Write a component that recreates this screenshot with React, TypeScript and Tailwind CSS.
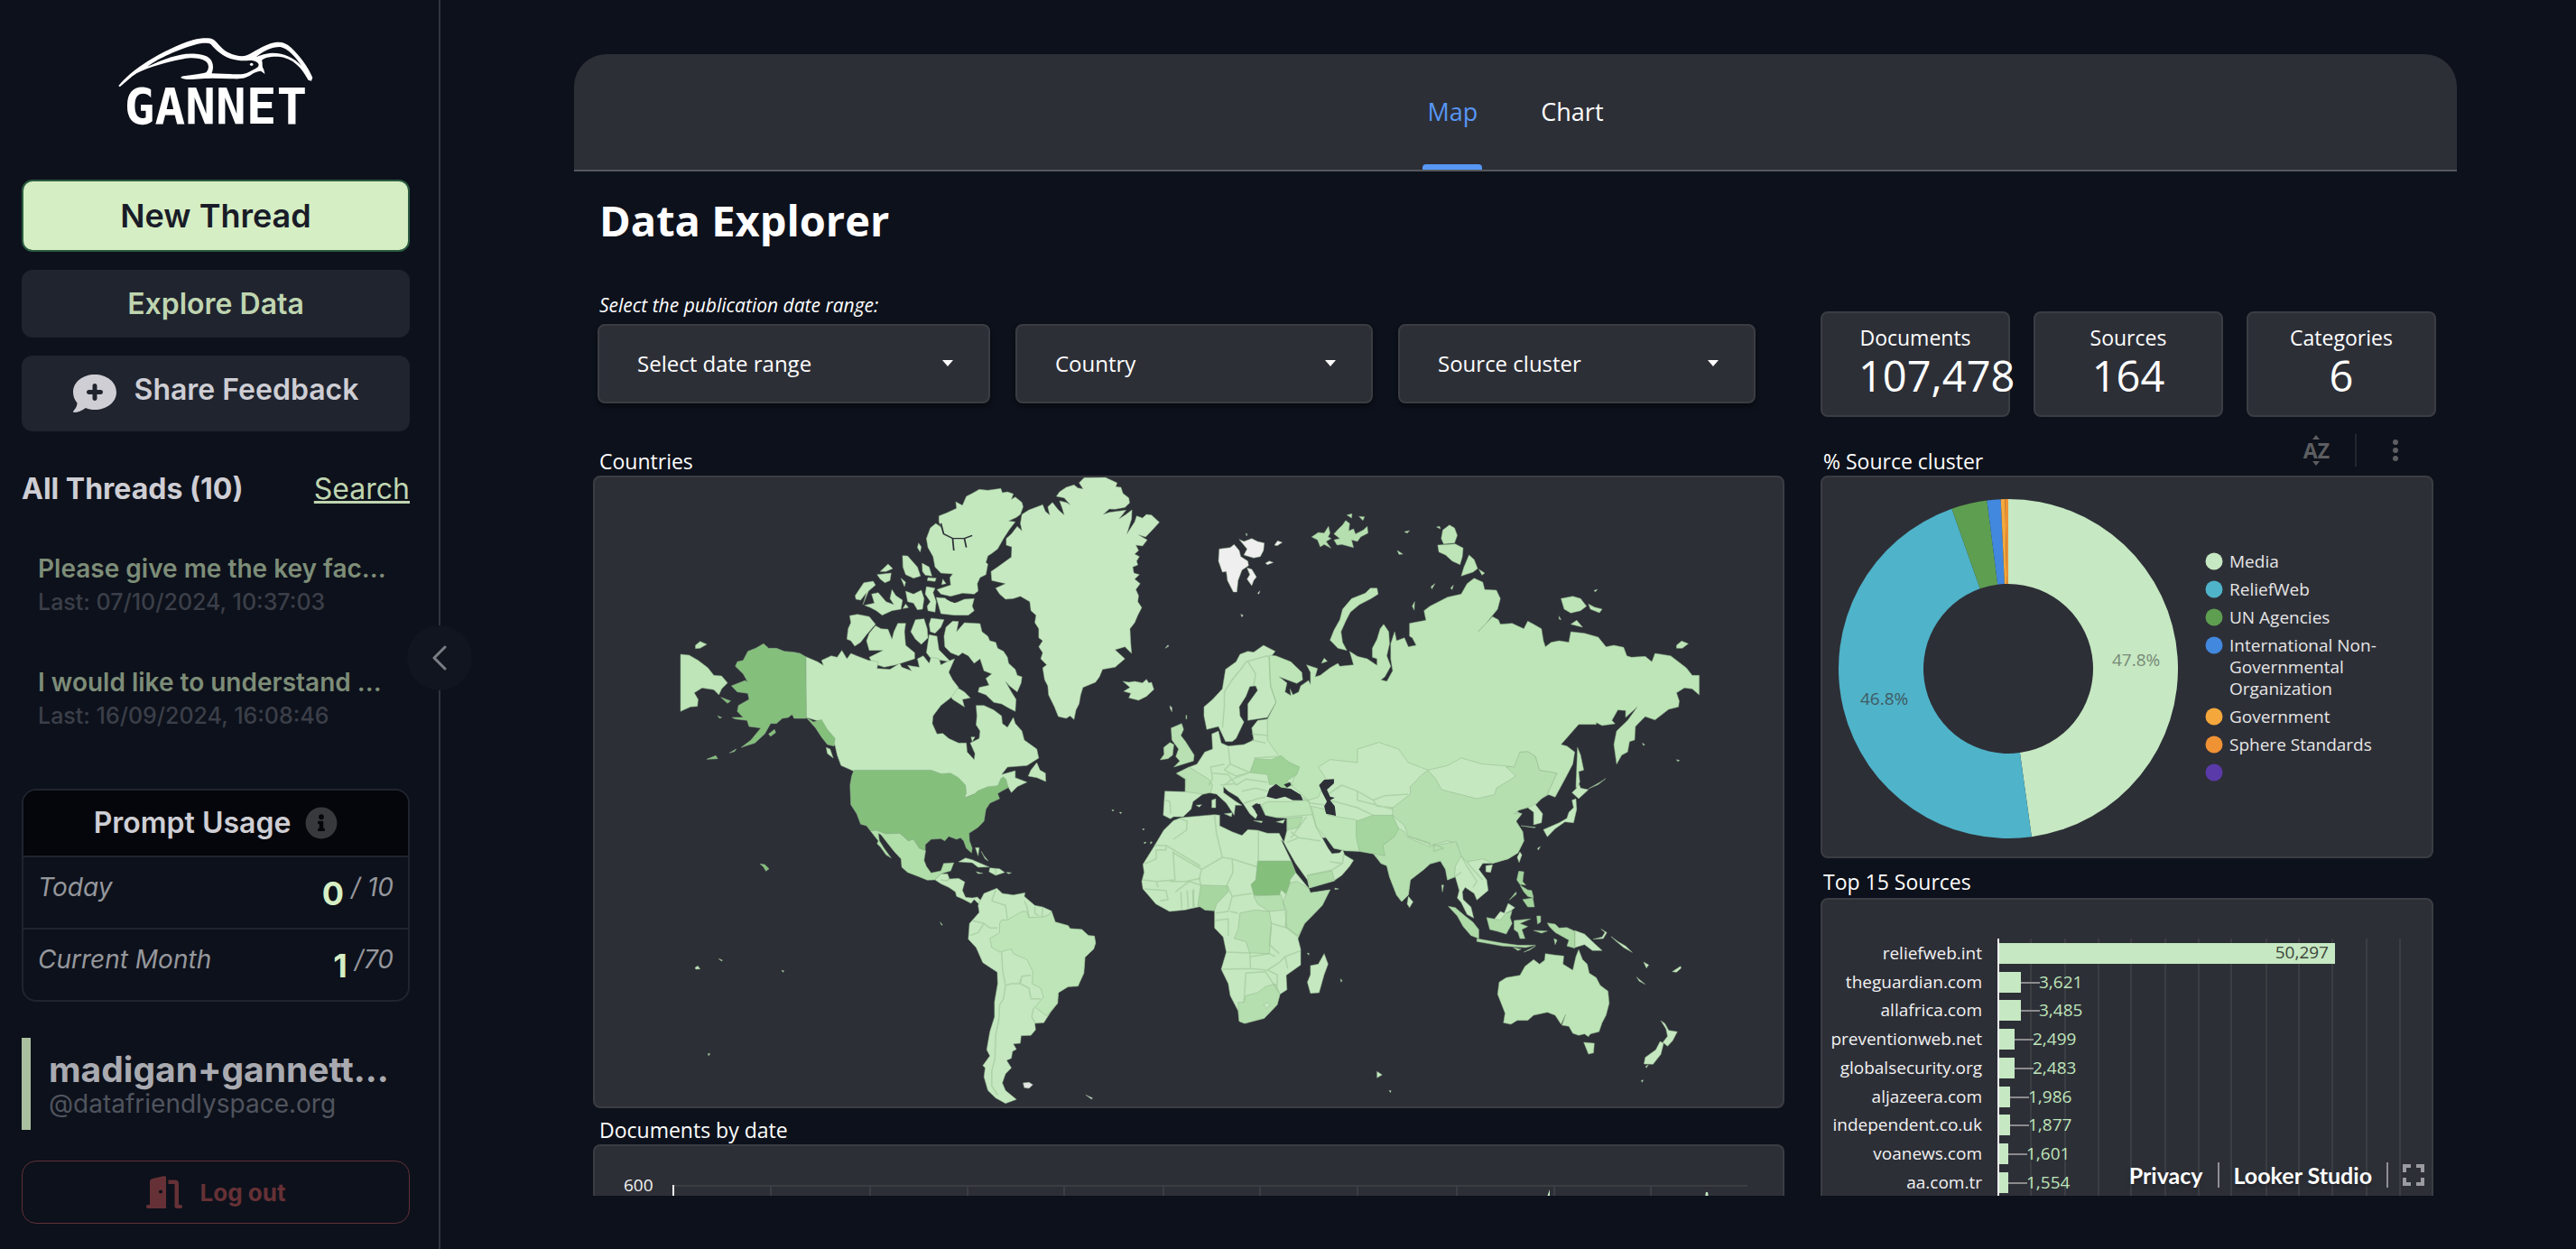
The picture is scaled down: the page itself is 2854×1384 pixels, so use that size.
import React from "react";
import { FaInfoCircle } from "react-icons/fa";

const threads = [
    { title: "Please give me the key facts", short: "Please give me the key fac...", last: "07/10/2024, 10:37:03" },
    { title: "I would like to understand", short: "I would like to understand ...", last: "16/09/2024, 16:08:46" },
];

const stats = [
    { label: "Documents", value: "107,478" },
    { label: "Sources", value: "164" },
    { label: "Categories", value: "6" },
];

const clusters = [
    { name: "Media", share: 47.8, color: "#c6e8c2" },
    { name: "ReliefWeb", share: 46.8, color: "#4fb3c9" },
    { name: "UN Agencies", share: 3.4, color: "#5e9e51" },
    { name: "International Non-Governmental Organization", share: 1.3, color: "#4188de" },
    { name: "Government", share: 0.4, color: "#f4a83c" },
    { name: "Sphere Standards", share: 0.3, color: "#ef9234" },
    { name: "", share: 0, color: "#5a3aa8" },
];

const sources = [
    { name: "reliefweb.int", value: "50,297", width: 372 },
    { name: "theguardian.com", value: "3,621", width: 24 },
    { name: "allafrica.com", value: "3,485", width: 24 },
    { name: "preventionweb.net", value: "2,499", width: 17 },
    { name: "globalsecurity.org", value: "2,483", width: 17 },
    { name: "aljazeera.com", value: "1,986", width: 12 },
    { name: "independent.co.uk", value: "1,877", width: 12 },
    { name: "voanews.com", value: "1,601", width: 10 },
    { name: "aa.com.tr", value: "1,554", width: 10 },
];

const Logo: React.FC = () => (
    <svg className="w-[216px] h-24" viewBox="380 128 626 288" preserveAspectRatio="none" role="img" aria-label="Gannet">
        <path
            fill="#fff"
            d="M381 287C400 262 430 235 475 205C520 178 570 150 620 135C650 127 675 128 685 133C697 140 708 162 732 176C750 185 770 190 785 188C805 184 830 160 870 146C900 138 915 142 935 160C965 190 990 225 1004 260L1000 271L990 268C975 240 950 198 900 191C870 189 848 194 841 203C845 212 840 222 847 232L851 248L838 238C825 240 815 243 805 252C790 262 775 265 750 264L680 262C650 263 620 266 600 266C580 264 575 258 590 255C620 250 650 248 662 243C673 232 672 213 660 205C640 193 610 193 590 198C540 207 480 225 440 245C420 258 400 278 385 291Z"
        />
        <path
            fill="#0d111b"
            d="M474 223C500 202 560 170 625 151C650 144 670 144 678 150C692 167 710 186 740 197C765 205 785 205 800 203C815 202 830 208 831 217C831 228 815 232 800 241C785 250 770 250 740 248L680 246C688 225 685 205 670 193C650 180 610 178 580 184C540 192 500 211 474 223ZM823 191C850 170 870 158 900 158C925 163 950 192 968 220C945 195 915 178 875 178C850 180 835 186 823 191Z"
        />
        <circle cx="808" cy="216" r="5" fill="#fff" />
    </svg>
);

const Sidebar: React.FC = () => (
    <aside className="relative w-[488px] shrink-0 h-full border-r-2 border-[#30343d] px-6 pr-8 font-['Inter',sans-serif] text-[#ceced4] flex flex-col">
        <a href="#home" className="relative mt-[42px] h-[98px] flex justify-center">
            <Logo />
            <span className="absolute bottom-0 text-[56px] leading-[44px] font-bold text-white font-['DejaVu_Sans_Mono',monospace]">GANNET</span>
        </a>

        <button className="mt-[59px] h-20 rounded-xl border-2 border-[#2a5c40] bg-[#d6eec4] text-[#191c28] text-4xl font-semibold">New Thread</button>
        <button className="mt-5 h-[75px] rounded-xl bg-[#20242f] text-[#bfd5b0] text-[32px] font-semibold">Explore Data</button>
        <button className="mt-5 h-[84px] rounded-xl bg-[#20242f] text-[32px] font-semibold flex items-center justify-center gap-5">
            <svg className="w-12 h-[42px]" viewBox="0 0 48 42" fill="currentColor">
                <path
                    fillRule="evenodd"
                    d="M24 0C37 0 48 8 48 19.500S37 39 24 39C20 39 17 38.500 14 37C10 40 5 42 1 42C-.5 42 0 40.500 1 39.500C3.500 37 4.500 34 4.500 31.500C1.500 28 0 24 0 19.500C0 8 11 0 24 0ZM24 10C22.500 10 21.500 11 21.500 12.500V17H17.500C16 17 15 18 15 19.500S16 22 17.500 22H21.500V26.500C21.500 28 22.500 29 24 29S26.500 28 26.500 26.500V22H30.500C32 22 33 21 33 19.500S32 17 30.500 17H26.500V12.500C26.500 11 25.500 10 24 10Z"
                />
            </svg>
            <span className="pb-2">Share Feedback</span>
        </button>

        <div className="mt-11 flex justify-between items-center leading-10 text-[32px]">
            <h2 className="font-bold">All Threads (10)</h2>
            <a href="#search" className="underline text-[#bfd5b0]">Search</a>
        </div>

        <ul className="mt-[50px] px-[18px] space-y-[52px]">
            {threads.map((t) => (
                <li key={t.title}>
                    <a href="#thread" title={t.title} className="block whitespace-nowrap">
                        <span className="block text-[28px] leading-9 font-semibold text-[#7d8d78]">{t.short}</span>
                        <span className="block text-[25px] leading-[38px] font-medium text-[#3b3f49]">Last: {t.last}</span>
                    </a>
                </li>
            ))}
        </ul>

        <section className="mt-[62px] border-2 border-[#1f242e] rounded-2xl overflow-hidden">
            <h2 className="h-[74px] bg-[#05060b] border-b-2 border-[#1f242e] flex items-center justify-center gap-4 text-[32px] font-semibold">
                Prompt Usage
                <FaInfoCircle className="text-4xl text-[#38393d]" />
            </h2>
            <div className="h-20 px-4 pt-4 flex justify-between border-b-2 border-[#1f242e] text-[28px] leading-[34px] italic text-[#95979c]">
                <span>Today</span>
                <span className="flex gap-2">
                    <b className="not-italic text-4xl leading-[48px] font-bold text-[#d6eec4]">0</b> / 10
                </span>
            </div>
            <div className="h-[78px] px-4 pt-4 flex justify-between text-[28px] leading-[34px] italic text-[#95979c]">
                <span>Current Month</span>
                <span className="flex gap-2">
                    <b className="not-italic text-4xl leading-[48px] font-bold text-[#d6eec4]">1</b> /70
                </span>
            </div>
        </section>

        <div className="mt-10 h-[102px] border-l-[10px] border-[#abc09f] pl-5 flex flex-col justify-center whitespace-nowrap">
            <strong className="text-[39px] leading-[44px] font-bold text-[#a9aab0]">madigan+gannett...</strong>
            <span className="text-[28px] leading-8 text-[#50545e]">@datafriendlyspace.org</span>
        </div>

        <button className="mt-[34px] h-[70px] rounded-2xl border border-[#5f3035] text-[#663136] text-[26px] font-bold flex items-center justify-center gap-5">
            <svg className="w-10 h-9" viewBox="0 0 40 36" fill="currentColor">
                <path fillRule="evenodd" d="M22 1.500V36H2C-.7 36-.7 32 2 32H4V7C4 4.500 5 3.500 7 3L19 .2C21 0 22 .5 22 1.500ZM16 15.500A2 2 0 1 0 16 19.600A2 2 0 1 0 16 15.500Z" />
                <path d="M24.500 4.500H32C34.500 4.500 36 6 36 8.500V32H38C40.700 32 40.700 36 38 36H34C32 36 31.500 35 31.500 33.500V9H24.500Z" />
            </svg>
            Log out
        </button>

        <button aria-label="Collapse sidebar" className="absolute top-[693px] -right-[37px] size-[72px] rounded-full bg-[#11151f] flex items-center justify-center">
            <svg className="w-4 h-7" viewBox="0 0 16 28" fill="none" stroke="#7a7d84" strokeWidth="3" strokeLinecap="round" strokeLinejoin="round">
                <path d="M14 2L2 14L14 26" />
            </svg>
        </button>
    </aside>
);

type SelectProps = { id: string; label: string; className: string };

const Select: React.FC<SelectProps> = ({ id, label, className }) => (
    <div className={"relative " + className}>
        <select id={id} aria-label={label} className="w-full h-[88px] appearance-none rounded-lg border-2 border-[#3a3d42] bg-[#2d2f37] pl-[42px] text-2xl text-white shadow-md shadow-black/40">
            <option>{label}</option>
        </select>
        <svg className="absolute right-[41px] top-10 w-3 h-[7px] pointer-events-none" viewBox="0 0 12 7">
            <path d="M0 0H12L6 7Z" fill="#fff" />
        </svg>
    </div>
);

/* land shapes, one list per quarter of the map */
const northWest = [
    // Greenland
    ["#c7e9c2", "M1271 88L1325 87 1355 105 1352 118 1365 120 1370 140 1385 155 1387 172 1375 187 1350 193 1335 192 1320 210 1335 203 1378 196 1360 225 1378 210 1393 195 1392 225 1380 275 1400 235 1405 215 1420 222 1430 210 1443 212 1463 236 1445 262 1428 285 1410 278 1432 295 1420 315 1403 312 1410 330 1400 342 1412 350 1405 365 1408 378 1395 385 1398 405 1412 410 1400 425 1414 440 1403 460 1410 480 1408 500 1418 520 1408 545 1400 570 1388 590 1390 640 1392 672 1375 650 1350 660 1375 690 1350 718 1318 725 1310 750 1300 768 1268 785 1262 810 1258 840 1250 860 1245 892 1235 880 1225 888 1205 882 1195 850 1180 810 1178 780 1170 760 1165 720 1175 710 1160 690 1165 670 1155 650 1165 630 1155 620 1155 590 1145 570 1148 545 1135 530 1132 500 1108 482 1090 490 1070 492 1055 475 1045 455 1070 440 1035 430 1033 400 1050 385 1085 352 1086 318 1072 312 1072 290 1085 275 1100 250 1112 265 1108 240 1112 210 1130 195 1165 178 1172 200 1183 212 1178 185 1190 170 1205 195 1220 212 1215 190 1208 165 1225 170 1235 178 1220 155 1200 150 1208 135 1225 120 1245 112 1255 122 1268 125 1258 105Z"],
    // Ellesmere and Axel Heiberg
    ["#c3e8be", "M1003 127L1025 130 1058 124 1062 138 1075 135 1090 142 1085 160 1095 152 1112 170 1115 185 1108 210 1098 220 1078 232 1095 235 1080 260 1065 290 1050 325 1035 340 1025 348 1020 370 1025 375 1020 410 1005 420 998 440 1000 465 990 475 960 472 930 482 905 475 895 460 930 445 928 420 935 408 905 405 890 385 885 350 872 320 868 290 878 255 892 240 905 252 915 280 900 235 900 215 920 205 945 190 943 168 960 180 970 150 985 140Z"],
    ["#c3e8be", "M893 486L915 488 930 500 945 503 965 492 990 490 985 515 990 530 975 545 940 545 905 540ZM868 450L890 455 885 470 893 500 890 535 872 530 870 515 878 500 865 475ZM807 347L820 348 845 385 853 415 835 422 815 410 808 385ZM857 372L875 385 882 415 865 412 858 400ZM770 375L782 390 765 400 750 400ZM742 410L778 405 775 430 762 437 750 425ZM848 305L855 318 852 335 845 320ZM872 420L893 422 890 433 870 430ZM910 425L918 440 907 443ZM803 422L815 435 812 450ZM708 437L732 432 738 445 720 465 706 510 715 470 700 495 688 492 686 480ZM728 475L745 470 765 500 785 510 775 490 780 460 790 480 807 495 803 525 780 530 755 545 740 530 725 520 710 512 735 505ZM815 465L835 475 855 462 862 490 858 525 845 527 835 505 820 500ZM815 508L822 520 808 523Z"],
    ["#c3e8be", "M672 547L692 542 722 550 738 575 715 610 700 635 685 648 675 630 665 625 668 590 675 570ZM738 580L752 590 770 592 780 625 785 600 795 572 815 572 812 600 815 645 838 670 838 690 815 700 790 710 760 718 730 705 722 685 757 662 722 662 715 630 722 605ZM840 560L862 557 870 590 872 620 855 642 840 625 828 600ZM880 555L913 560 905 585 890 605 878 600 875 575ZM875 610L895 615 900 660 930 700 880 690 868 670Z"],
    // Baffin
    ["#c3e8be", "M935 565L950 566 945 600 965 570 1005 573 1010 600 1025 615 1030 630 1045 635 1050 655 1065 665 1075 685 1078 705 1095 725 1100 745 1112 750 1110 770 1100 800 1080 780 1070 765 1085 800 1097 825 1095 865 1080 855 1060 840 1040 835 1020 810 1000 800 1003 785 1028 778 1020 755 1035 740 1015 730 1005 690 990 705 975 680 960 670 950 680 930 670 915 650 913 615 918 585ZM940 780L965 800 980 820 960 825 965 850 935 825 930 815Z"],
    // Canada
    ["#c3e8be", "M560 683L590 700 605 712 600 695 625 680 640 685 652 662 665 690 675 672 690 680 720 695 745 700 742 722 775 725 800 705 805 718 830 730 820 712 850 718 845 690 860 680 875 705 880 685 900 690 905 710 920 700 940 690 925 735 935 760 950 785 930 820 905 845 885 880 883 905 895 940 910 938 925 955 950 970 970 970 972 1000 990 1025 992 1005 980 970 1003 955 1005 930 995 910 997 880 995 845 1015 845 1040 860 1060 880 1062 905 1075 918 1090 885 1095 905 1112 930 1118 960 1150 990 1155 1020 1125 1045 1075 1050 1060 1075 1095 1062 1095 1085 1125 1100 1100 1115 1085 1135 1075 1112 1050 1112 990 1140 966 1152 900 1090 685 1065 650 1045 640 1010 635 980 600 900 561 885ZM1150 1035L1158 1060 1172 1070 1173 1098 1150 1085 1128 1080 1135 1060ZM612 985L622 990 630 1020 615 1005ZM982 950L992 950 985 965Z"],
    // Alaska
    ["#84bf7c", "M452 640L465 655 485 655 505 665 530 668 545 672 560 683 561 888 530 888 525 875 515 885 500 888 485 905 470 905 455 940 430 970 410 978 395 985 420 960 445 920 415 915 410 895 380 890 372 885 400 885 385 865 388 845 415 825 412 805 385 800 370 780 405 762 412 768 400 740 380 715 385 700 400 695 412 665 432 655ZM561 885L580 900 600 892 615 925 635 955 632 980 615 975 600 950 585 920ZM365 1003L382 990 378 998ZM307 1024L330 1012 335 1022ZM343 818L368 830 360 838ZM465 940L480 925 483 935 470 948ZM335 880L345 885 340 888Z"],
    ["#bde5b7", "M240 675L262 678 285 695 310 720 325 745 345 747 360 770 345 790 338 810 325 793 295 787 275 803 285 825 283 848 265 850 240 865ZM278 645L290 632 307 642 290 655 278 656Z"],
    // Iceland, Britain, Ireland
    ["#c3e8be", "M1370 765L1385 768 1400 765 1420 770 1430 758 1436 770 1443 768 1449 792 1430 815 1410 828 1385 820 1390 805 1372 798 1388 785Z"],
    ["#b8e0b2", "M1493 920L1520 905 1525 925 1518 945 1530 965 1552 1010 1550 1030 1500 1050 1515 1030 1505 1015 1512 990 1495 960ZM1474 985L1490 968 1500 975 1497 1010 1485 1022 1465 1026 1475 1008ZM1531 878L1533 878 1533 890 1531 890Z"],
    ["#d8e0d6", "M1478 655L1485 644 1487 648ZM1490 846L1495 852 1495 866 1491 856Z"],
];

const southWest = [
    ["#84bf7c", "M683 -20L880 -20 905 -8 930 -10 950 5 968 30 970 55 966 72 990 60 1000 48 1025 35 1050 32 1058 8 1065 2 1072 12 1077 38 1060 50 1050 58 1055 75 1030 90 1020 110 1015 150 1000 170 977 190 978 215 985 240 983 255 970 240 963 215 955 205 945 210 925 200 915 215 905 208 880 210 865 228 865 248 850 240 835 210 822 215 800 190 765 192 740 180 725 182 715 165 700 160 690 125 675 95 673 30 677 0ZM443 292L455 294 466 308 458 316 452 302Z"],
    ["#b0dfa9", "M725 182L740 180 765 192 800 190 822 215 835 210 850 240 866 248 862 280 868 300 880 322 905 315 912 290 938 288 930 315 905 325 890 345 870 346 850 335 820 320 805 303 803 275 785 250 770 225 752 195 745 190 748 215 760 240 778 272 765 262 750 235 742 225 745 215Z"],
    ["#c3e8be", "M890 345L905 325 922 325 927 342 950 340 966 352 960 380 968 403 985 405 998 402 1008 415 1003 427 990 410 982 423 960 408 945 400 942 385 925 370 905 358ZM950 285L968 272 985 278 1028 302 1000 303 985 288ZM1030 305L1055 308 1068 320 1045 330 1028 318ZM995 318L1012 323 1000 324ZM1072 320L1085 321 1078 325ZM993 238L1003 238 1000 265ZM1008 250L1018 275 1026 282 1015 265Z"],
    ["#c5e8c0", "M1005 415L1015 390 1048 373 1062 390 1090 395 1120 388 1118 400 1145 430 1165 435 1187 448 1197 485 1230 497 1235 507 1265 510 1282 530 1297 532 1300 555 1295 575 1273 602 1270 655 1255 698 1230 700 1205 720 1203 755 1185 785 1168 820 1145 822 1147 843 1135 862 1110 863 1108 888 1090 890 1098 908 1088 915 1085 938 1073 945 1085 970 1070 990 1062 1020 1070 1045 1098 1075 1070 1088 1045 1070 1025 1045 1015 1000 1018 970 1012 962 1030 930 1022 910 1030 850 1042 800 1042 750 1050 690 1049 652 1012 620 995 570 975 542 978 490 1003 453 1000 430Z"],
    ["#bde5b7", "M1060 478L1075 478 1085 470 1112 450 1125 450 1130 470 1165 468 1180 462 1187 448 1197 485 1230 497 1235 507 1265 510 1282 530 1297 532 1300 555 1295 575 1273 602 1270 655 1255 698 1230 700 1205 720 1203 755 1175 797 1145 768 1167 735 1160 705 1138 690 1140 650 1125 610 1090 590 1085 575 1055 585 1035 570 1030 540 1055 520 1055 490Z"],
    ["#e4e4e4", "M1115 1020L1130 1018 1140 1026 1130 1038 1118 1036ZM1275 1060L1292 1070 1290 1074Z"],
    ["#c3e8be", "M903 485L909 494 907 496ZM337 607L347 612 345 615ZM277 637L284 631 290 641 279 642ZM498 646L504 647 502 652ZM310 923L315 922 312 930ZM1342 112L1347 113 1344 117ZM1361 120L1367 121 1364 125ZM1420 175L1425 176 1422 180ZM1424 220L1430 220 1425 225ZM1441 218L1445 220 1440 226Z"],
];

const scandinavia = [
    ["#c5e8c0", "M78 850L100 825 125 790 133 725 160 700 170 675 190 665 205 668 230 645 260 665 245 690 262 720 262 835 240 885 190 895 190 840 215 795 210 780 195 782 185 815 168 850 170 880 180 900 160 955 150 965 133 965 115 915 85 925 78 880Z"],
];

const southEast = [
    // Eurasia below Russia
    ["#c5e8c0", "M8 -8L40 -30 60 -40 80 -80 100 -90 98 -140 115 -150 122 -110 140 -100 180 -105 205 -120 200 -160 215 -185 240 -190 400 -150 650 -100 900 -90 1000 -60 985 10 960 60 940 75 925 95 943 125 940 155 920 162 920 120 905 105 885 112 885 95 870 115 890 125 875 150 892 185 895 215 880 255 855 275 815 290 790 290 780 310 800 345 804 380 775 412 768 390 745 370 738 385 740 410 760 435 767 472 750 460 735 420 725 405 730 380 720 335 700 345 695 310 682 282 655 292 640 310 605 345 600 395 583 417 570 395 552 335 545 298 530 290 510 258 475 250 440 248 410 240 390 205 380 205 395 240 405 258 425 255 432 243 437 262 460 280 450 300 430 330 410 348 347 372 342 345 312 290 290 240 282 220 290 180 290 140 265 138 235 130 222 95 212 90 200 100 215 128 210 142 195 125 180 95 165 70 140 50 128 35 128 55 160 85 175 97 158 97 155 130 135 90 110 60 90 55 75 60 50 85 45 110 25 135 0 135 -8 142 -26 130 -22 50 30 52 30 10ZM98 80L108 75 108 105 98 105ZM130 125L150 122 148 135ZM58 97L72 95 66 103ZM263 152L285 145 280 157ZM205 148L228 150 225 155Z"],
    ["#b5dfaf", "M560 105L605 60 605 35 635 -5 650 -20 670 10 685 45 730 60 775 75 820 62 825 40 875 0 850 -30 870 -35 880 -80 905 -82 925 -65 935 -20 980 -10 955 60 915 100 885 112 870 125 890 125 875 150 892 185 895 215 880 255 855 275 815 290 790 275 750 285 728 260 725 225 700 215 660 230 600 200 590 165 560 130Z"],
    ["#b5dfaf", "M565 165L590 185 600 205 655 235 690 225 722 218 735 265 720 300 718 335 700 345 695 310 682 282 655 292 640 310 605 345 600 395 583 417 570 395 552 335 545 298 530 290 515 262 535 230 565 200Z"],
    ["#a5d69f", "M467 150L510 130 560 130 575 175 565 200 535 230 540 265 510 258 475 250 465 205Z"],
    ["#bde5b7", "M352 100L385 110 395 130 467 145 467 205 475 250 440 248 410 240 390 205 365 170ZM225 95L240 85 300 85 345 80 355 128 290 135 265 138 235 130Z"],
    ["#aedba8", "M342 330L405 315 412 348 347 372ZM290 140L330 135 320 170 290 180Z"],
    ["#b8e0b2", "M8 -10L40 -30 90 10 100 30 95 55 75 60 30 52 32 10Z"],
    // Africa
    ["#c5e8c0", "M0 148L20 138 105 128 118 130 118 165 150 185 175 197 190 178 215 180 240 190 270 190 282 220 275 212 300 280 312 320 345 372 350 388 400 378 380 430 335 490 318 540 325 575 325 628 288 662 290 710 272 725 265 760 232 805 182 822 168 815 165 780 145 730 140 690 122 642 135 585 127 535 105 505 105 448 80 445 75 432 45 440 30 445 -10 450 -45 425 -78 375 -81 350 -75 320 -78 293 -50 235 -25 180Z"],
    ["#84bf7c", "M215 282L300 282 312 320 298 345 296 375 290 395 275 378 270 400 235 398 205 395 198 360 210 345Z"],
    ["#a7d6a0", "M70 362L138 365 140 385 110 425 105 447 80 445 62 430Z"],
    ["#b5dfaf", "M298 355L315 350 345 372 350 388 400 378 380 430 335 490 318 530 285 500 290 450 280 420ZM205 398L275 395 285 445 245 450 215 425Z"],
    ["#b5dfaf", "M170 455L210 445 245 450 250 490 245 590 195 588 185 550 155 540 165 510ZM165 752L180 752 185 730 215 720 235 700 260 690 272 725 265 760 232 805 182 822 168 815Z"],
    ["#c5e8c0", "M385 590L395 625 385 660 372 720 350 722 342 685 350 660 350 630 370 625ZM230 760L240 752 247 762 238 772ZM600 400L612 418 603 437 597 425ZM885 252L890 262 883 287 878 270ZM798 298L815 295 810 320 798 318ZM412 372L422 375 413 377ZM685 362L690 362 687 385ZM930 240L937 234 932 246ZM427 674L431 680 428 685ZM342 588L347 590 345 595ZM520 982L533 993 520 1003ZM551 1045L556 1046 554 1052Z"],
    // Oceania
    ["#bde5b7", "M832 685L850 670 885 662 898 632 920 610 935 625 948 612 950 590 975 595 997 598 995 625 1020 645 1028 600 1035 577 1045 610 1057 625 1062 655 1080 670 1090 695 1110 715 1113 755 1105 795 1095 820 1087 850 1065 857 1060 866 1050 857 1035 862 1020 855 1010 832 992 828 1002 792 990 825 975 795 955 785 920 795 905 812 878 812 862 825 843 820 847 788 828 725ZM1048 885L1075 888 1073 920 1060 924Z"],
    ["#c5e8c0", "M1245 813L1255 822 1265 845 1287 850 1275 880 1262 898 1250 885 1262 865 1258 840ZM1243 882L1252 888 1245 925 1225 958 1202 957 1205 935 1232 910ZM1206 965L1213 960 1208 970ZM1195 1012L1200 1010 1197 1018Z"],
    ["#aedba8", "M702 433L720 437 745 465 765 485 780 510 780 540 760 530 740 500 725 465ZM775 540L840 555 880 562 925 562 900 570 840 565 775 550ZM895 585L925 565 910 578ZM800 470L820 475 845 458 865 448 860 470 865 490 850 525 825 515 808 510ZM870 480L912 475 885 490 905 500 890 510 898 540 885 540 880 520 870 510ZM955 488L975 492 985 505 1005 503 1025 515 1025 572 1005 565 1010 545 975 520 960 500ZM920 513L955 515 940 522ZM972 540L980 545 975 560ZM868 570L888 575 880 580Z"],
    ["#a2d49b", "M882 316L895 318 892 350 900 362 885 360 877 345ZM885 362L905 378 915 380 920 405 905 400 895 385ZM875 385L858 412 876 392ZM892 410L918 405 922 435 905 435ZM928 465L938 465 938 485 930 492Z"],
    ["#c5e8c0", "M820 475L835 450 845 455 855 423 872 437 862 448 850 455 835 478ZM1025 513L1050 525 1070 550 1095 580 1070 580 1050 560 1025 570ZM1072 542L1095 535 1102 520 1092 508 1107 520 1098 540ZM1118 533L1135 550 1155 565 1172 586 1150 570 1130 548ZM1183 668L1205 692 1190 682ZM1201 618L1214 628 1208 638ZM1274 650L1295 632 1297 638 1285 652Z"],
    // Japan
    ["#c3e8be", "M945 178L985 155 1005 140 1010 120 1022 105 1018 80 1028 75 1030 110 1022 155 1000 152 975 175 955 202ZM1018 55L1030 40 1030 5 1040 40 1060 45 1035 75ZM1060 42L1090 20 1104 8 1085 28ZM888 165L925 170 922 172Z"],
];

const russia = [
    ["#bde5b7", "M245 678L262 680 300 700 328 735 330 760 315 772 270 750 290 770 285 800 300 812 298 790 305 810 320 800 325 780 345 762 350 775 350 735 340 710 368 722 362 750 375 745 400 720 420 705 425 715 460 710 450 665 470 682 495 690 520 712 520 690 508 685 508 655 520 625 528 590 537 575 550 600 552 640 545 680 555 715 540 750 530 760 545 765 560 730 555 690 555 640 565 600 570 630 590 620 600 650 620 645 610 620 603 615 603 572 645 562 640 530 655 515 700 485 735 475 750 440 768 422 790 435 795 460 825 462 835 490 828 525 800 570 778 600 815 550 830 560 835 575 865 572 895 590 905 565 920 575 940 590 945 630 950 650 965 635 985 630 1010 635 1015 600 1050 605 1085 618 1105 650 1125 645 1150 652 1158 680 1170 685 1205 682 1222 700 1230 672 1270 680 1310 720 1325 745 1343 745 1343 810 1325 790 1305 787 1285 803 1292 830 1290 850 1265 858 1230 893 1205 882 1195 895 1180 915 1178 960 1165 965 1160 1000 1145 1010 1132 1040 1125 975 1132 930 1160 895 1185 850 1155 885 1155 862 1135 860 1120 895 1128 906 1095 912 1080 902 1080 908 1035 908 990 975 1005 980 1025 1000 1020 1040 1000 1090 975 1150 955 1140 980 1070 935 1060 925 1015 905 998 885 1000 870 1050 840 1045 790 1040 735 1020 700 1045 650 1060 600 1035 575 990 525 968 470 990 470 1035 400 1025 370 1050 390 1090 380 1120 370 1150 345 1160 300 1110 320 1050 270 1015 240 960 240 890 262 835 248 780 245 720Z"],
    ["#9ed296", "M208 1022L250 1025 275 1012 295 1035 322 1050 315 1075 290 1095 305 1110 280 1122 262 1108 245 1108 240 1075 195 1068Z"],
    ["#bde5b7", "M400 628L410 595 425 560 432 525 455 490 490 472 503 455 520 455 523 475 505 490 475 510 452 535 440 565 428 600 432 635 443 662 420 655ZM378 705L385 688 393 698ZM672 252L680 250 682 258ZM688 262L705 245 718 255 725 280 718 305 690 308 684 290ZM675 312L720 308 740 322 738 350 732 377 712 365 695 345 678 335ZM755 345L768 360 777 390 765 402 735 415 742 385ZM780 392L795 405 788 412ZM990 490L1020 482 1040 490 1055 515 1040 530 1015 538 998 525ZM1060 508L1075 518 1095 525 1088 537 1065 525ZM1015 575L1030 562 1045 585ZM1285 645L1298 631 1315 640 1300 655 1285 655ZM1032 985L1040 1010 1048 1060 1035 1065 1038 1100 1028 1120ZM610 515L616 500 615 528ZM658 450L668 440 660 458ZM708 455L715 445 712 460ZM572 330L586 342 576 343ZM590 268L603 264 597 272ZM1075 462L1083 460 1077 468ZM985 548L990 560 985 558ZM1198 970L1204 976 1200 978ZM1285 1025L1293 1028 1288 1031Z"],
    ["#b5dfaf", "M353 285L370 270 385 272 396 250 400 272 395 285 403 290 390 300 402 322 385 310 375 318 368 295ZM420 260L432 245 440 230 450 240 448 265 460 258 465 275 485 262 495 250 497 272 478 285 470 300 455 295 460 320 430 310 418 312 410 295 425 290 410 275ZM443 212L456 208 455 222ZM474 217L488 218 484 230Z"],
    ["#efefef", "M117 325L145 320 155 310 168 330 172 350 190 365 192 380 175 395 165 430 162 468 153 468 138 430 135 400 125 402 115 365ZM168 293L180 300 200 290 215 300 232 305 230 330 222 350 205 355 180 345 188 325ZM188 388L200 392 212 418 205 430 200 447 188 425 195 410ZM258 312L266 298 278 303 265 314ZM235 372L245 365 255 370 240 377ZM215 472L221 464 218 475ZM185 274L188 274 187 282ZM172 542L178 545 175 551Z"],
];

const westBorders =
    "M1060 585L1063 650 1070 695 1085 690 1105 690 1112 665 1135 662M1112 665L1108 690 1130 705 1135 740 1160 740M1070 695L1065 740 1055 760 1053 810 1045 860 1043 940 1035 980 1035 1030 1050 1060M985 480L1015 490 1030 505 1050 505M980 530L1000 520 1015 490M1045 378L1035 415 1070 430 1075 475M1118 415L1125 435 1130 470M1145 435L1145 455 1155 465M1165 437L1163 468M1142 770L1137 800 1147 822M905 345L920 348 927 342M1045 308L1045 328M1478 80L1490 85 1492 125M1450 230L1480 230 1480 245 1455 245 1455 275 1425 292M1480 230L1550 285 1568 300M1498 250L1503 345 1455 350M1420 345L1455 350 1460 370M1425 375L1480 380 1485 410 1465 415M1490 350L1530 350 1568 340M1518 385L1520 440M1548 380L1552 435";

const eastBorders =
    "M105 130L110 190 125 270 72 310 0 255M125 270L150 275 215 302M217 182L217 282M150 275L152 320 135 365M72 310L66 340 70 362 40 350 5 385M35 380L38 440M52 375L50 435M15 140L35 150 33 180 0 210M138 365L150 400 140 450 108 455M150 400L200 390M145 450L165 455M105 480L140 475 140 530M135 585L195 588 197 640 125 642M197 600L245 590 260 600M197 640L240 645 270 620M180 752L185 655 235 650 270 720M250 490L290 505 320 535M250 500L245 560 270 590M270 620L285 600 325 580M285 445L290 505M285 600L292 640M240 645L265 660 265 700M300 205L340 135M290 220L320 205 375 215M355 128L365 170 380 205M320 205L300 185M400 285L432 290 435 260M342 330L405 312 432 290M395 60L430 30 470 50 510 80 540 65 600 60M400 80L470 105 510 130M470 50L470 80 560 110M510 80L520 100 560 105M735 265L750 300 775 350 765 370M750 285L765 310 790 345M718 335L735 320M600 200L655 222 655 232M665 225L690 240 665 250ZM1025 515L1025 570M330 70L350 90 385 95M100 -10L140 -5 160 30M140 -95L145 -40 195 -12M130 -40L95 -30 100 10 90 30M145 -40L130 -20 160 0 195 -12M160 30L185 10 240 20M175 50L210 40 240 50M180 90L215 75 235 70M195 -12L150 10 130 30M205 -60L265 -65M200 -120L235 -110M200 -140L240 -135M120 30L160 25";

const nordicBorders = "M125 920L130 850 130 800 150 760 175 720 185 700 240 680 245 690M205 780L210 740 190 700M262 835L248 780 245 690";

const Shapes: React.FC<{ items: string[][] }> = ({ items }) => (
    <>
        {items.map(([fill, d], i) => (
            <path key={i} d={d} fill={fill} stroke="#8fb38b" strokeOpacity="0.5" strokeLinejoin="round" vectorEffect="non-scaling-stroke" />
        ))}
    </>
);

const Borders: React.FC<{ d: string }> = ({ d }) => (
    <path d={d} fill="none" stroke="#9cc496" strokeOpacity="0.6" strokeWidth="1.5" strokeLinejoin="round" vectorEffect="non-scaling-stroke" />
);

const WorldMap: React.FC = () => (
    <svg className="block w-full aspect-[1316/697]" viewBox="21 87 3034 2091" preserveAspectRatio="none" role="img" aria-label="Documents per country">
        <Shapes items={northWest} />
        <path d="M905 240L912 275 935 290 965 290 985 280M935 290L938 330M965 290L970 320M920 490L950 492 940 502Z" fill="none" stroke="#2d2f37" strokeWidth="4" />
        <g transform="translate(0 1080)">
            <Shapes items={southWest} />
        </g>
        <g transform="translate(1499 1080)">
            <Shapes items={southEast} />
        </g>
        <g transform="translate(1499 0)">
            <Shapes items={scandinavia} />
            <Shapes items={russia} />
            <Borders d={nordicBorders} />
        </g>
        <g transform="translate(0 1080)">
            <Borders d={westBorders} />
        </g>
        <g transform="translate(1499 1080)">
            <Borders d={eastBorders} />
            {/* Black Sea and Caspian */}
            <path d="M238 68L245 42 262 26 275 38 300 42 325 62 331 80 305 80 285 68 262 76ZM282 28L298 20 300 30 290 38ZM372 30L385 12 410 10 410 24 392 45 400 68 412 72 400 80 412 100 415 132 390 125 385 100 392 85 380 55ZM208 95L222 92 218 110 230 130 222 145 210 120Z" fill="#2d2f37" />
        </g>
    </svg>
);

const Donut: React.FC = () => {
    let start = 0;
    return (
        <svg className="size-[376px] shrink-0" viewBox="0 0 376 376" role="img" aria-label="Share of documents by source cluster">
            {clusters.map((c) => {
                const a = (start / 100) * 2 * Math.PI;
                start += c.share;
                const b = (start / 100) * 2 * Math.PI;
                const at = (r: number, t: number) => `${188 + r * Math.sin(t)} ${188 - r * Math.cos(t)}`;
                return <path key={c.color} fill={c.color} d={`M${at(188, a)}A188 188 0 0 1 ${at(188, b)}L${at(94, b)}A94 94 0 0 0 ${at(94, a)}Z`} />;
            })}
            <text x="303" y="185" fontSize="19" fill="#788a77">47.8%</text>
            <text x="24" y="228" fontSize="19" fill="#3f5a63">46.8%</text>
        </svg>
    );
};

const TopSources: React.FC = () => (
    <svg className="block w-full" viewBox="0 0 675 420" role="img" aria-label="Top 15 sources">
        {[231, 269, 306, 342, 380, 417, 453, 492, 528, 565, 603, 640].map((x) => (
            <path key={x} d={`M${x} 43V420`} stroke="#3b3e42" strokeWidth="2" />
        ))}
        {sources.map((s, i) => {
            const y = 48 + Math.round(i * 31.7);
            const end = 196 + s.width;
            return (
                <g key={s.name} fontSize="19">
                    <text x="177" y={y + 18} textAnchor="end" fill="#f2f2f2">{s.name}</text>
                    <rect x="196" y={y} width={s.width} height="23" fill="#c6e8c2" />
                    {i === 0 ? (
                        <text x={end - 7} y={y + 17} textAnchor="end" fill="#3c463b">{s.value}</text>
                    ) : (
                        <>
                            <path d={`M${end} ${y + 12}h21`} stroke="#8b8b8d" strokeWidth="2" />
                            <text x={end + 20} y={y + 18} fill="#bfe5ba">{s.value}</text>
                        </>
                    )}
                </g>
            );
        })}
        <path d="M195 43V420" stroke="#f0f0f0" strokeWidth="2" />
    </svg>
);

const DocumentsByDate: React.FC = () => (
    <svg className="block w-full" viewBox="0 0 1316 240" role="img" aria-label="Documents by date">
        <path d="M88 44H1277M195 44V240M305 44V240M413 44V240M520 44V240M630 44V240M737 44V240M845 44V240M955 44V240M1063 44V240M1170 44V240" stroke="#3b3e42" strokeWidth="2" />
        <path d="M87 43V240" stroke="#f0f0f0" strokeWidth="2" />
        <text x="32" y="50" fontSize="19" fill="#f2f2f2">600</text>
        <path d="M1053 62L1058 48V62ZM1229 62L1231 51H1233L1235 62Z" fill="#c6e8c2" />
    </svg>
);

const App: React.FC = () => {
    return (
        <div className="flex h-screen min-h-[1384px] bg-[#0d111b] text-white">
            <Sidebar />

            <main className="flex-1 min-w-0 flex flex-col pt-[60px] pb-[59px] pl-[148px] pr-[132px] font-['Open_Sans',sans-serif]">
                <nav className="h-[130px] shrink-0 rounded-t-[36px] border-b-2 border-[#55585d] bg-[#2d2f37] flex justify-center gap-[60px] text-[27px]">
                    <a href="#map" className="relative h-full px-[5px] flex items-center text-[#5797f5]">
                        Map
                        <span className="absolute inset-x-0 bottom-0 h-1.5 rounded-t bg-[#5797f5]" />
                    </a>
                    <a href="#chart" className="h-full px-[5px] flex items-center">Chart</a>
                </nav>

                <div className="relative flex-1 min-h-0 overflow-hidden pl-[21px] pr-[23px] grid grid-cols-[1320fr_682fr] gap-x-10 items-start">
                    <div className="pt-[22px]">
                        <h1 className="pl-[7px] text-[47px] leading-[64px] font-bold">Data Explorer</h1>
                        <label htmlFor="range" className="block mt-12 pl-[7px] text-[21px] leading-7 italic">Select the publication date range:</label>
                        <div className="mt-[7px] pl-[5px] pr-8 flex gap-7">
                            <Select id="range" label="Select date range" className="flex-[435]" />
                            <Select id="country" label="Country" className="flex-[396]" />
                            <Select id="cluster" label="Source cluster" className="flex-[396]" />
                        </div>

                        <h2 className="mt-12 pl-[7px] text-[23px] leading-8">Countries</h2>
                        <div className="rounded-lg border-2 border-[#3a3d42] bg-[#2d2f37]">
                            <WorldMap />
                        </div>

                        <h2 className="mt-2 pl-[7px] text-[23px] leading-8">Documents by date</h2>
                        <div className="rounded-lg border-2 border-[#3a3d42] bg-[#2d2f37]">
                            <DocumentsByDate />
                        </div>
                    </div>

                    <div className="pt-[155px]">
                        <div className="grid grid-cols-3 gap-[26px]">
                            {stats.map((s) => (
                                <div key={s.label} className="h-[117px] rounded-lg border-2 border-[#3a3d42] bg-[#2d2f37] px-10 pt-[11px] text-center whitespace-nowrap">
                                    <div className="text-[23px] leading-8">{s.label}</div>
                                    <div className="text-[47px] leading-[52px]">{s.value}</div>
                                </div>
                            ))}
                        </div>

                        <div className="h-[65px] pl-[3px] pr-[38px] flex justify-between items-end">
                            <h2 className="text-[23px] leading-8">% Source cluster</h2>
                            <div className="mb-[10px] flex items-center text-[#5d5e61]">
                                <button aria-label="Sort" className="relative text-[23px] leading-9 font-bold">
                                    AZ
                                    <svg className="absolute inset-x-0 top-0 mx-auto w-2 h-9" viewBox="0 0 8 36" fill="currentColor">
                                        <path d="M0 6L4 1L8 6ZM0 30L4 35L8 30Z" />
                                    </svg>
                                </button>
                                <span className="ml-7 mr-9 w-0.5 h-9 bg-[#24272f]" />
                                <button aria-label="More" className="px-1">
                                    <svg className="w-1.5 h-6" viewBox="0 0 6 24" fill="currentColor">
                                        <circle cx="3" cy="3" r="3" />
                                        <circle cx="3" cy="12" r="3" />
                                        <circle cx="3" cy="21" r="3" />
                                    </svg>
                                </button>
                            </div>
                        </div>
                        <div className="mr-[3px] h-[424px] rounded-lg border-2 border-[#3a3d42] bg-[#2d2f37] pl-[18px] pt-1 flex items-center gap-[30px]">
                            <Donut />
                            <ul className="w-[200px] space-y-[7px] pb-1 text-[19px] leading-6 text-[#e6e6e6]">
                                {clusters.map((c) => (
                                    <li key={c.color} className="flex gap-[7px] min-h-6">
                                        <svg className="mt-0.5 size-5 shrink-0" viewBox="0 0 20 20">
                                            <circle cx="10" cy="10" r="9.500" fill={c.color} />
                                        </svg>
                                        <span>{c.name}</span>
                                    </li>
                                ))}
                            </ul>
                        </div>

                        <h2 className="mt-2.5 pb-0.5 pl-[3px] text-[23px] leading-8">Top 15 Sources</h2>
                        <div className="mr-[3px] rounded-lg border-2 border-[#3a3d42] bg-[#2d2f37]">
                            <TopSources />
                        </div>
                    </div>

                    <div className="absolute bottom-[7px] right-9 flex items-center gap-4 text-[25px] leading-8 font-bold text-white text-shadow-lg font-['Lato',sans-serif]">
                        <a href="#privacy">Privacy</a>
                        <span className="w-0.5 h-7 bg-[#8f9094]" />
                        <a href="#looker">Looker Studio</a>
                        <span className="w-0.5 h-7 bg-[#8f9094]" />
                        <button aria-label="Full screen">
                            <svg className="size-6" viewBox="0 0 24 24" fill="none" stroke="#9a9ba0" strokeWidth="4">
                                <path d="M2 9V2H9M15 2H22V9M22 15V22H15M9 22H2V15" />
                            </svg>
                        </button>
                    </div>
                </div>
            </main>
        </div>
    );
};

export default App;
